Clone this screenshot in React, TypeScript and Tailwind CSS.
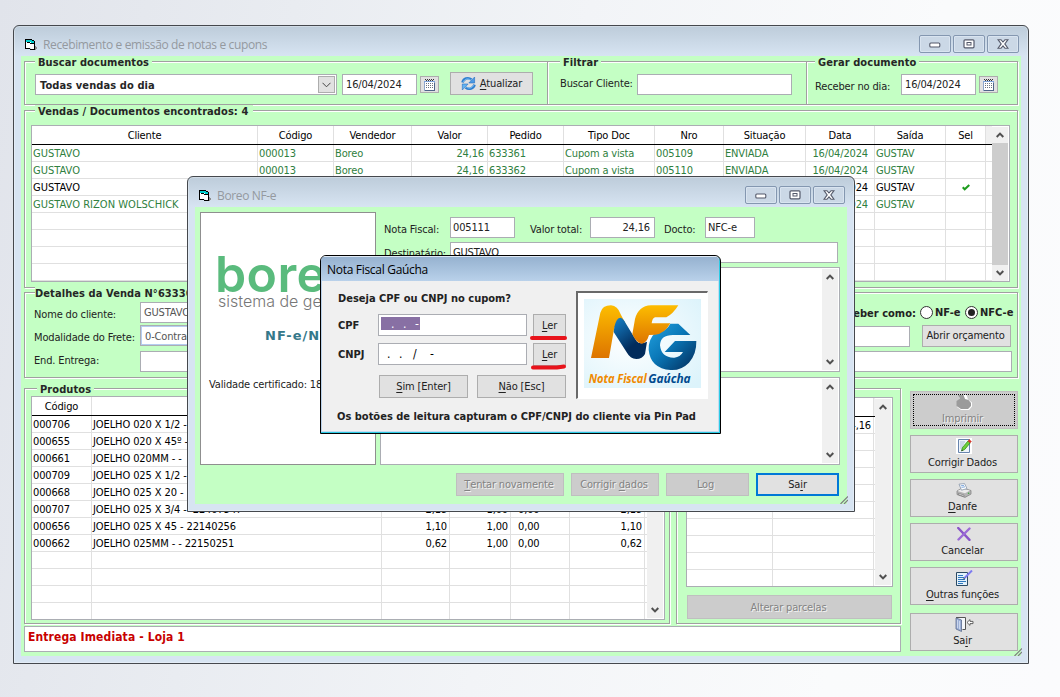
import type { ReactNode } from "react";

type Kids = { children?: ReactNode; className?: string };

/* ---------- small drawings ---------- */

const FormIcon = () => (
  <svg width="13" height="12" viewBox="0 0 13 12" shapeRendering="crispEdges">
    <path d="M1 1h6v1h2v8h-3v-1h-5z" fill="#fff" />
    <path d="M1 1h6v1h2v2h-3v-1h-5z" fill="#00d0d0" />
    <path d="M0 0h7v1h-7zM7 1h2v1h-2zM9 2h1v9h-1zM0 0h1v10h-1zM1 9h4v1h-4zM5 10h4v1h-4zM2 3h3v1h-3zM5 4h4v1h-4z" fill="#000" />
    <path d="M10 7h1v1h1v2h-1v1h-1z" fill="#8d8d8d" />
  </svg>
);

const CalendarIcon = () => (
  <svg width="11" height="12" viewBox="0 0 11 12" shapeRendering="crispEdges">
    <path d="M0 2h11v10H0z" fill="#8fa6cb" />
    <path d="M10 4h1v8H1v-1h9z" fill="#4f6488" />
    <path d="M1 3h9v8H1z" fill="#fff" />
    <path d="M0 2h11v1H0z" fill="#7ea4dc" />
    <path d="M1 0h1v1h-1zM3 0h1v1h-1zM5 0h1v1h-1zM7 0h1v1h-1zM9 0h1v1h-1zM2 1h1v1h-1zM4 1h1v1h-1zM6 1h1v1h-1zM8 1h1v1h-1z" fill="#333" />
    <path d="M2 4.5h7M2 6.5h7M2 8.5h7" stroke="#6c7480" strokeDasharray="1 1" />
  </svg>
);

const RefreshIcon = () => (
  <svg width="15" height="15" viewBox="0 0 15 15" fill="none">
    <path d="M1.5 6.5C2.4 2.7 7 .8 10.4 3.6" stroke="#2f7fd0" strokeWidth="2.6" />
    <path d="M13.6 1v6H7.8z" fill="#4b9be6" stroke="#2a6fc0" strokeWidth=".6" />
    <path d="M13.5 8.6C12.6 12.4 8 14.2 4.6 11.4" stroke="#2f7fd0" strokeWidth="2.6" />
    <path d="M1.3 14V8h5.8z" fill="#63b4f2" stroke="#2a6fc0" strokeWidth=".6" />
    <path d="M2.4 5.8C3.6 3 7 2 9.6 4M12.6 9.2c-1.2 2.8-4.6 3.8-7.2 1.8" stroke="#8fd0fa" strokeWidth=".8" />
  </svg>
);

const Chevron = ({ down = false }: { down?: boolean }) => (
  <svg width="8" height="6" viewBox="0 0 8 6" fill="none" stroke="#505050" strokeWidth="2">
    <path d={down ? "M.7 1l3.3 3.4L7.3 1" : "M.7 5L4 1.6 7.3 5"} />
  </svg>
);

const PrinterIcon = ({ off = false }: { off?: boolean }) =>
  off ? (
    <svg width="16" height="15" viewBox="0 0 16 15">
      <path d="M2.500 0h8l1.500 4.500 4 3v4l-3 3.500H5l-4-3V6l3-2z" fill="#fff" />
      <path d="M2 0h5.500l1.500 4 3.500 1 2.500 3v3l-3 3H5l-4.500-3V6L4 3.500z" fill="#9b9b9b" />
    </svg>
  ) : (
    <svg width="16" height="15" viewBox="0 0 16 15">
      <path d="M1 8l5-3 9 2.500v3.600L9 14.400 1 11.500z" fill="#b4b4b4" stroke="#858585" strokeWidth=".8" />
      <path d="M1.500 8L6 5.500l8 2.100-5 2.600z" fill="#ececec" />
      <path d="M3 1.200L8.500.6l2.500 5-5.500 1.600z" fill="#fff" stroke="#8796aa" strokeWidth=".8" />
      <path d="M4.700 2.800L8 2.400M5.500 4.400l3.500-.6" stroke="#5f93d3" strokeWidth=".8" />
      <path d="M2.500 10.300L8 12.200v1.200L2.500 11.600z" fill="#fff" stroke="#555" strokeWidth=".5" />
      <circle cx="12.600" cy="10.300" r=".8" fill="#3ba53b" />
    </svg>
  );

const EditIcon = () => (
  <svg width="16" height="16" viewBox="0 0 16 16">
    <path d="M0 0h16v16H0z" fill="#fff" />
    <path d="M2.500 1.500h11v13h-11z" fill="#eef4fb" stroke="#6784ad" />
    <path d="M4 4h5M4 6h4M4 8h3M4 10h3" stroke="#a9bdd8" />
    <path d="M5.500 13l1-3.500L12 3l2.200 1.800-5.500 6.700z" fill="#6fd03a" stroke="#2f8a1d" strokeWidth=".8" />
    <path d="M12 3l1.200-1.400 2.200 1.800-1.200 1.400z" fill="#d8382e" stroke="#d8382e" strokeWidth=".6" />
    <path d="M5.500 13l.4-1.500 1.200 1z" fill="#333" />
  </svg>
);

const CancelIcon = () => (
  <svg width="14" height="14" viewBox="0 0 14 14" fill="none" strokeLinecap="round">
    <path d="M1.200 1L12.500 12.800" stroke="#8a55c8" strokeWidth="2.400" />
    <path d="M12.500 1.500L1.500 12.500" stroke="#9b6bd6" strokeWidth="2.400" />
  </svg>
);

const NotesIcon = () => (
  <svg width="17" height="16" viewBox="0 0 17 16">
    <path d="M.5 2.500h11v13H.5z" fill="#e2f1fb" stroke="#2c4a63" />
    <path d="M2 5.500h5M2 7.500h6M2 9.500h7M2 11.500h8M2 13.500h5" stroke="#2f78bd" strokeWidth="1" />
    <path d="M8.500 8L16 .5" stroke="#7d7bf0" strokeWidth="2" />
    <path d="M7.300 9.300l1.500-1.500" stroke="#222" strokeWidth="1" />
  </svg>
);

const DoorIcon = () => (
  <svg width="19" height="15" viewBox="0 0 19 15">
    <path d="M1 .5h9.500v12H7.500" fill="#f5f7fb" stroke="#555" />
    <path d="M1 1l5.500 2v11.500L1 12z" fill="#9db0d6" stroke="#5b6b8e" strokeWidth=".8" />
    <path d="M2.500 3v8M4.500 4v8" stroke="#d5dff2" strokeWidth=".8" />
    <path d="M12 5.500L15 2.600v1.800h3v2.200h-3v1.800z" fill="#fff" stroke="#555" strokeWidth=".9" />
  </svg>
);

const Grip = () => (
  <svg width="8" height="8" viewBox="0 0 8 8" stroke="#7d7d7d" strokeWidth="1.200">
    <path d="M.5 8L8 .5M4 8l4-4" />
  </svg>
);

/* ---------- controls ---------- */

const U = ({ children }: Kids) => <span className="underline underline-offset-2">{children}</span>;

const Btn = ({ children, className = "", off = false }: Kids & { off?: boolean }) => (
  <button
    className={
      (off
        ? "border-[#bfbfbf] bg-[#cccccc] text-[#838383] [text-shadow:1px_1px_0_#f2f2f2] "
        : "border-[#adadad] bg-[#e1e1e1] text-[#222] ") +
      "flex shrink-0 items-center justify-center border whitespace-pre " +
      className
    }
  >
    {children}
  </button>
);

const Box = ({ children, className = "" }: Kids) => (
  <div className={"shrink-0 overflow-hidden border border-[#abadb3] bg-white whitespace-pre " + className}>{children}</div>
);

const Group = ({ children, className = "", title, legend = "" }: Kids & { title?: string; legend?: string }) => (
  <section
    className={
      "flex shrink-0 flex-col items-start border border-[#a0a0a0] shadow-[inset_1px_1px_0_#fff,1px_1px_0_#fff] " + className
    }
  >
    {title && (
      <h2
        className={
          "-mt-[6px] h-[14px] bg-[#c4ffc4] leading-[14px] font-bold tracking-[0.08px] whitespace-pre text-[#262626] " + legend
        }
      >
        {title}
      </h2>
    )}
    {children}
  </section>
);

const ScrollBar = ({ thumb = false, className = "" }: { thumb?: boolean; className?: string }) => (
  <div className={"flex w-4 shrink-0 flex-col items-center bg-[#f0f0f0] " + className}>
    <div className="flex h-[16px] shrink-0 items-center justify-center">
      <Chevron />
    </div>
    <div className={"w-full flex-1 " + (thumb ? "bg-[#cdcdcd]" : "")} />
    <div className="flex h-[16px] shrink-0 items-center justify-center">
      <Chevron down />
    </div>
  </div>
);

type Col = { w: string; head: string; cell?: string };

const Grid = ({ cols, rows, tones = [], tail }: { cols: Col[]; rows: ReactNode[][]; tones?: string[]; tail: string }) => (
  <div className="flex shrink-0 flex-col">
    <div className="flex h-[19px] shrink-0 border-b border-black">
      {cols.map((c, i) => (
        <div key={i} className={"shrink-0 overflow-hidden border-r border-[#e0e0e0] text-center leading-[20px] text-black " + c.w}>
          {c.head}
        </div>
      ))}
      <div className={"bg-[#f0f0f0] " + tail} />
    </div>
    {rows.map((r, y) => (
      <div key={y} className={"flex h-[17px] shrink-0 border-b border-[#e0e0e0] " + (tones[y] || "text-black")}>
        {cols.map((c, i) => (
          <div
            key={i}
            className={"shrink-0 overflow-hidden border-r border-[#e0e0e0] px-[1px] leading-[18px] whitespace-pre " + c.w + " " + (c.cell || "")}
          >
            {r[i]}
          </div>
        ))}
      </div>
    ))}
  </div>
);

const CapButton = ({ children }: Kids) => (
  <div className="flex h-[18px] w-8 items-center justify-center rounded-[2px] border border-[#8497b0] bg-[#cbd8e6] shadow-[inset_0_0_0_1px_#d9e4f0]">
    {children}
  </div>
);

const Caption = ({ title }: { title: string }) => (
  <header className="flex h-[30px] shrink-0 items-start">
    <span className="mt-[13px] ml-[11px]">
      <FormIcon />
    </span>
    <h1 className="mt-[10px] ml-[5px] flex-1 font-['Open_Sans','Noto_Sans',sans-serif] text-[12px] leading-[18px] tracking-[-0.36px] whitespace-pre text-[#94999f]">
      {title}
    </h1>
    <div className="mt-[9px] mr-[9px] flex gap-[2px]">
      <CapButton>
        <svg width="12" height="8" viewBox="0 0 12 8">
          <rect x=".8" y="3" width="10" height="4" rx="1" fill="#fff" stroke="#54596a" strokeWidth="1.100" />
        </svg>
      </CapButton>
      <CapButton>
        <svg width="12" height="10" viewBox="0 0 12 10">
          <rect x="1" y=".8" width="10" height="8" rx="1" fill="#fff" stroke="#54596a" strokeWidth="1.200" />
          <rect x="4" y="3.500" width="4" height="2.500" fill="#fff" stroke="#54596a" />
        </svg>
      </CapButton>
      <CapButton>
        <svg width="12" height="10" viewBox="0 0 12 10">
          <path d="M1 .7h3L6 3 8 .7h3L7.800 4.900 11 9.300H8L6 6.900 4 9.300H1l3.200-4.400z" fill="#fff" stroke="#54596a" strokeWidth="1.100" />
        </svg>
      </CapButton>
    </div>
  </header>
);

/* ---------- data ---------- */

const salesCols: Col[] = [
  { w: "w-[226px]", head: "Cliente", cell: "tracking-[0.03px]" },
  { w: "w-[76px]", head: "Código" },
  { w: "w-[78px]", head: "Vendedor" },
  { w: "w-[76px]", head: "Valor", cell: "text-right pr-[3px]" },
  { w: "w-[76px]", head: "Pedido" },
  { w: "w-[91px]", head: "Tipo Doc" },
  { w: "w-[69px]", head: "Nro" },
  { w: "w-[82px]", head: "Situação" },
  { w: "w-[69px]", head: "Data", cell: "text-right pr-[6px]" },
  { w: "w-[71px]", head: "Saída" },
  { w: "w-[40px]", head: "Sel", cell: "flex items-center justify-center" },
];

const Check = () => (
  <svg width="8" height="7" viewBox="0 0 8 7" fill="none">
    <path d="M.7 3.300l2 2L7.300 1" stroke="#1d9c1d" strokeWidth="2" />
  </svg>
);

const sales: ReactNode[][] = [
  ["GUSTAVO", "000013", "Boreo", "24,16", "633361", "Cupom a vista", "005109", "ENVIADA", "16/04/2024", "GUSTAV"],
  ["GUSTAVO", "000013", "Boreo", "24,16", "633362", "Cupom a vista", "005110", "ENVIADA", "16/04/2024", "GUSTAV"],
  ["GUSTAVO", "", "", "", "", "", "", "", "16/04/2024", "GUSTAV", <Check key="check" />],
  ["GUSTAVO RIZON WOLSCHICK", "", "", "", "", "", "", "", "16/04/2024", "GUSTAV"],
  [], [], [], [],
];

const G = "text-[#2f8040]";

const productCols: Col[] = [
  { w: "w-[60px]", head: "Código" },
  { w: "w-[290px]", head: "", cell: "tracking-[-0.1px]" },
  { w: "w-[68px]", head: "", cell: "text-right pr-[2px]" },
  { w: "w-[61px]", head: "", cell: "text-right pr-[2px]" },
  { w: "w-[59px]", head: "", cell: "pl-[7px]" },
  { w: "w-[75px]", head: "", cell: "text-right pr-[2px]" },
];

const products: ReactNode[][] = [
  ["000706", "JOELHO 020 X 1/2 -"],
  ["000655", "JOELHO 020 X 45º -"],
  ["000661", "JOELHO 020MM - -"],
  ["000709", "JOELHO 025 X 1/2 -"],
  ["000668", "JOELHO 025 X 20 -"],
  ["000707", "JOELHO 025 X 3/4 -  22407547", "2,18", "1,00", "0,00", "2,18"],
  ["000656", "JOELHO 025 X 45 - 22140256", "1,10", "1,00", "0,00", "1,10"],
  ["000662", "JOELHO 025MM - - 22150251", "0,62", "1,00", "0,00", "0,62"],
  [], [], [], [],
];

const parcelCols: Col[] = [
  { w: "w-[86px]", head: "" },
  { w: "w-[101px]", head: "", cell: "text-right pr-[2px]" },
];

const parcels: ReactNode[][] = [["", "24,16"], [], [], [], [], [], [], [], [], []];

/* ---------- windows ---------- */

const Radio = ({ on = false }: { on?: boolean }) => (
  <span className="flex size-[13px] shrink-0 items-center justify-center rounded-full border border-[#333] bg-white">
    {on && <span className="size-[7px] rounded-full bg-[#222]" />}
  </span>
);

const SideButton = ({ icon, children, className = "", off = false }: Kids & { icon: ReactNode; off?: boolean }) => (
  <Btn off={off} className={"relative h-[38px] w-[108px] flex-col " + className}>
    <span className="flex h-[16px] items-center">{icon}</span>
    <span className="h-[16px] pr-[3px] leading-[18px]">{children}</span>
    {off && <span className="absolute inset-[2px] border border-dotted border-black" />}
  </Btn>
);

const DateField = () => (
  <>
    <Box className="h-[21px] w-[75px] pl-[3px] leading-[19px] text-[#222]">16/04/2024</Box>
    <Btn className="mt-[2px] ml-[3px] h-[17px] w-[19px]">
      <CalendarIcon />
    </Btn>
  </>
);

const WINDOW =
  "absolute flex flex-col rounded-t-[6px] border border-[#45484d] bg-[#d7e4f2] bg-[linear-gradient(#bdccda,#d7e4f2_30px)] shadow-[inset_0_0_0_1px_rgba(255,255,255,0.3)]";

const MainWindow = () => (
  <div className={WINDOW + " top-[25px] left-[13px] h-[639px] w-[1016px]"}>
    <Caption title="Recebimento e emissão de notas e cupons" />
    <main className="ml-[7px] flex h-[600px] w-[1000px] flex-col bg-[#c4ffc4] pt-[5px] pl-[3px]">
      <div className="flex">
        <Group title="Buscar documentos" legend="ml-[10px] px-[3px]" className="h-[44px] w-[524px]">
          <div className="ml-[10px] flex items-start">
            <Box className="mt-[4px] flex h-[21px] w-[302px] justify-between pl-[4px] leading-[21px] font-bold tracking-[0.1px] text-[#262626]">
              Todas vendas do dia
              <span className="mt-[1px] mr-[1px] flex h-[17px] w-[17px] items-center justify-center border border-[#adadad] bg-[#e1e1e1]">
                <svg width="9" height="6" viewBox="0 0 9 6" fill="none" stroke="#444">
                  <path d="M.5 .8l4 4 4-4" />
                </svg>
              </span>
            </Box>
            <div className="mt-[4px] ml-[5px] flex items-start">
              <DateField />
            </div>
            <Btn className="mt-[2px] ml-[11px] h-[23px] w-[83px] gap-[4px]">
              <RefreshIcon />
              <span className="pt-[2px]">
                <U>A</U>tualizar
              </span>
            </Btn>
          </div>
        </Group>
        <Group title="Filtrar" legend="ml-[12px] px-[3px]" className="-ml-px h-[44px] w-[260px]">
          <div className="mt-[4px] ml-[12px] flex items-start">
            <span className="w-[77px] leading-[19px] whitespace-pre text-[#222]">Buscar Cliente:</span>
            <Box className="h-[21px] w-[155px]" />
          </div>
        </Group>
        <Group title="Gerar documento" legend="ml-[8px] px-[3px]" className="-ml-px h-[44px] w-[212px]">
          <div className="mt-[4px] ml-[8px] flex items-start">
            <span className="mt-[3px] w-[86px] leading-[19px] whitespace-pre text-[#222]">Receber no dia:</span>
            <DateField />
          </div>
        </Group>
      </div>

      <Group title="Vendas / Documentos encontrados: 4" legend="ml-[10px] pl-[3px] pr-[5px]" className="mt-[5px] h-[178px] w-[994px]">
        <Box className="mt-[6px] ml-[6px] flex h-[157px] w-[979px]">
          <Grid cols={salesCols} rows={sales} tones={[G, G, "text-black", G]} tail="w-[6px]" />
          <ScrollBar thumb className="mt-[1px]" />
        </Box>
      </Group>

      <Group title="Detalhes da Venda N°633363" legend="ml-[10px]" className="mt-[4px] h-[86px] w-[994px] text-[#222]">
        <div className="mt-[1px] ml-[9px] flex h-[23px] items-start">
          <span className="w-[106px] leading-[25px] whitespace-pre">Nome do cliente:</span>
          <Box className="h-[21px] w-[620px] pl-[3px] leading-[19px] text-[#555]">GUSTAVO</Box>
          <div className="ml-[68px] flex h-[21px] items-center font-bold tracking-[0.02px] whitespace-pre">
            <span className="w-[92px] pt-[3px] pr-[4px] text-right">Receber como:</span>
            <Radio />
            <span className="ml-[2px] w-[30px] pt-[1px]">NF-e</span>
            <Radio on />
            <span className="ml-[2px] pt-[1px]">NFC-e</span>
          </div>
        </div>
        <div className="ml-[9px] flex h-[26px] items-start">
          <span className="w-[106px] leading-[25px] whitespace-pre">Modalidade do Frete:</span>
          <Box className="h-[21px] w-[400px] pl-[4px] leading-[21px] text-[#555] shadow-[inset_0_0_0_1px_#b5cdf0]">0-Contratação</Box>
          <Box className="mt-[1px] ml-[10px] h-[21px] w-[360px]" />
          <Btn className="ml-[12px] h-[22px] w-[89px] pt-[1px] pr-[2px]">Abrir orçamento</Btn>
        </div>
        <div className="ml-[9px] flex items-start">
          <span className="w-[106px] leading-[19px] whitespace-pre">End. Entrega:</span>
          <Box className="h-[21px] w-[872px]" />
        </div>
      </Group>

      <div className="flex">
        <div className="mt-[10px] flex w-[877px] shrink-0 flex-col">
          <div className="flex">
            <Group title="Produtos" legend="ml-[12px] px-[3px]" className="h-[236px] w-[646px]">
              <Box className="-mt-[1px] ml-[6px] flex h-[224px] w-[634px]">
                <Grid cols={productCols} rows={products} tail="w-[2px]" />
                <ScrollBar className="my-[1px]" />
              </Box>
            </Group>
            <Group className="ml-[6px] h-[236px] w-[225px]">
              <Box className="mt-[8px] ml-[9px] flex h-[190px] w-[207px]">
                <Grid cols={parcelCols} rows={parcels} tail="w-[1px]" />
                <ScrollBar className="my-[1px]" />
              </Box>
              <Btn off className="mt-[8px] ml-[10px] h-[24px] w-[205px] pt-[2px] pr-[2px]">
                Alterar parcelas
              </Btn>
            </Group>
          </div>
          <Box className="mt-[2px] h-[26px] w-[877px] pl-[3px] text-[12px] leading-[20px] font-bold tracking-[0.12px] text-[#c80000]">
            Entrega Imediata - Loja 1
          </Box>
        </div>
        <aside className="mt-[13px] ml-[9px] flex flex-col gap-[6px]">
          <SideButton off icon={<PrinterIcon off />}>
            <U>I</U>mprimir
          </SideButton>
          <SideButton icon={<EditIcon />}>Corrigir Dados</SideButton>
          <SideButton icon={<PrinterIcon />}>
            <U>D</U>anfe
          </SideButton>
          <SideButton icon={<CancelIcon />}>Cancelar</SideButton>
          <SideButton icon={<NotesIcon />}>
            <U>O</U>utras funções
          </SideButton>
          <SideButton icon={<DoorIcon />} className="mt-[2px]">
            Sa<U>i</U>r
          </SideButton>
        </aside>
      </div>
    </main>
    <span className="absolute right-[6px] bottom-[7px]">
      <Grip />
    </span>
  </div>
);

const InvoiceWindow = () => (
  <div className={WINDOW + " top-[176px] left-[187px] h-[336px] w-[668px]"}>
    <Caption title="Boreo NF-e" />
    <main className="ml-[7px] flex h-[297px] w-[652px] flex-col bg-[#c4ffc4] pt-[5px] pl-[5px] text-[#222]">
      <div className="flex">
        <div className="flex h-[253px] w-[176px] shrink-0 flex-col overflow-hidden border border-[#8f8f8f] bg-white whitespace-pre">
          <div className="mt-[31px] ml-[14px] font-['Inter',sans-serif] text-[50px] leading-[60px] font-semibold tracking-[0.4px] text-[#5abb7d]">
            boreo
          </div>
          <div className="-mt-[12px] ml-[17px] font-['Inter',sans-serif] text-[16px] leading-[18px] font-light tracking-[0px] text-[#777]">
            sistema de gestão
          </div>
          <div className="mt-[17px] ml-[64px] font-['DejaVu_Sans',sans-serif] text-[13px] leading-[18px] font-bold tracking-[1px] text-[#35788a]">
            NF-e/NFC-e
          </div>
          <div className="mt-[31px] ml-[8px] leading-[18px]">Validade certificado: 18</div>
        </div>
        <div className="ml-[4px] flex flex-col">
          <div className="mt-[5px] ml-[4px] flex h-[24px] items-start whitespace-pre">
            <span className="w-[66px] leading-[25px]">Nota Fiscal:</span>
            <Box className="h-[21px] w-[65px] pl-[2px] leading-[19px]">005111</Box>
            <span className="ml-[15px] w-[60px] leading-[25px]">Valor total:</span>
            <Box className="h-[21px] w-[65px] pr-[4px] text-right leading-[19px]">24,16</Box>
            <span className="ml-[9px] w-[41px] leading-[25px]">Docto:</span>
            <Box className="h-[21px] w-[50px] pl-[2px] leading-[19px]">NFC-e</Box>
          </div>
          <div className="ml-[4px] flex items-start whitespace-pre">
            <span className="h-[21px] w-[66px] leading-[26px]">Destinatário:</span>
            <Box className="mt-[1px] h-[21px] w-[388px] pl-[2px] leading-[19px]">GUSTAVO</Box>
          </div>
          <Box className="mt-[4px] flex h-[105px] w-[460px] justify-end p-[1px]">
            <ScrollBar />
          </Box>
          <Box className="mt-[5px] flex h-[88px] w-[460px] justify-end p-[1px]">
            <ScrollBar />
          </Box>
        </div>
      </div>
      <div className="mt-[8px] ml-[256px] flex gap-[7px]">
        <Btn off className="h-[23px] w-[108px] pt-[2px] pr-[2px]">
          <U>T</U>entar novamente
        </Btn>
        <Btn off className="h-[23px] w-[88px] pt-[2px] pr-[2px]">
          Corrigir <U>d</U>ados
        </Btn>
        <Btn off className="h-[23px] w-[83px] pt-[2px] pr-[4px]">
          Log
        </Btn>
        <Btn className="h-[23px] w-[83px] border-2 !border-[#0078d7] pt-[2px]">
          Sa<U>i</U>r
        </Btn>
      </div>
    </main>
    <span className="absolute right-[6px] bottom-[7px]">
      <Grip />
    </span>
  </div>
);

const NfgLogo = () => (
  <svg width="117" height="89" viewBox="71 297 351 267">
    <defs>
      <radialGradient id="sky" cx=".4" cy=".45" r=".75">
        <stop offset="0" stopColor="#fff" />
        <stop offset="1" stopColor="#dcf3fb" />
      </radialGradient>
      <linearGradient id="gold" x1="0" y1="0" x2="0" y2="1">
        <stop offset="0" stopColor="#fdbd00" />
        <stop offset="1" stopColor="#dd7400" />
      </linearGradient>
      <linearGradient id="navy" x1="0" y1="0" x2=".6" y2="1">
        <stop offset="0" stopColor="#1683cb" />
        <stop offset=".75" stopColor="#022c5c" />
      </linearGradient>
      <linearGradient id="blue" x1="0" y1="0" x2="1" y2="1">
        <stop offset="0" stopColor="#22a2e0" />
        <stop offset=".45" stopColor="#0a78b8" />
        <stop offset="1" stopColor="#022a58" />
      </linearGradient>
    </defs>
    <path d="M71 297h351v267H71z" fill="url(#sky)" />
    <path d="M92 474L120 338Q126 316 152 316Q172 317 181 343L210 398L162 382L146 474Z" fill="url(#gold)" />
    <path d="M162 381Q168 353 181 353Q190 356 196 370L229 424Q238 435 260 425L254 462Q246 477 228 477Q209 475 200 458L160 396Z" fill="url(#navy)" />
    <path
      d="M354 371L390 405H345Q300 402 299 436Q303 474 342 473Q360 471 368 456H313L344 423H408Q409 462 386 488Q362 512 331 510Q270 505 265 449Q264 417 285 398Q318 396 330 371Z"
      fill="url(#blue)"
    />
    <path
      d="M354 316Q338 342 318 352H284Q276 354 274 370H330Q312 402 285 404L266 405Q259 430 244 431Q228 429 216 403L224 357Q234 318 272 316Z"
      fill="url(#gold)"
    />
    <text
      x="85"
      y="548"
      fontFamily="'Open Sans','Noto Sans',sans-serif"
      fontSize="38"
      fontWeight="700"
      fontStyle="italic"
      textLength="174"
      lengthAdjust="spacingAndGlyphs"
      fill="#f08a00"
    >
      Nota Fiscal
    </text>
    <text
      x="264"
      y="548"
      fontFamily="'Open Sans','Noto Sans',sans-serif"
      fontSize="38"
      fontWeight="700"
      fontStyle="italic"
      textLength="127"
      lengthAdjust="spacingAndGlyphs"
      fill="#004a8f"
    >
      Gaúcha
    </text>
  </svg>
);

const RedMark = ({ d }: { d: string }) => (
  <svg className="absolute top-[21px] -left-[4px]" width="40" height="8" viewBox="0 0 40 8" fill="none">
    <path d={d} stroke="#e8131b" strokeWidth="4" strokeLinecap="round" />
  </svg>
);

const DocumentDialog = () => (
  <div className="absolute top-[255px] left-[320px] flex h-[179px] w-[401px] flex-col rounded-t-[6px] border border-black bg-[#f0f0f0] text-[#222] shadow-[inset_-1px_-1px_0_#2ccbe4,inset_1px_0_0_#b9d1ea,inset_-2px_-2px_0_#c5dbf0]">
    <header className="mr-[1px] h-[25px] shrink-0 rounded-t-[5px] bg-[linear-gradient(#dfe9f4_1px,#96b2d0_1px,#b9d1ea)] pl-[6px] font-['Open_Sans','Noto_Sans',sans-serif] text-[12px] leading-[28px] tracking-[-0.3px] text-black">
      Nota Fiscal Gaúcha
    </header>
    <div className="flex">
      <div className="ml-[17px] flex w-[238px] shrink-0 flex-col whitespace-pre">
        <div className="mt-[8px] h-[25px] leading-[19px] font-bold tracking-[0px]">Deseja CPF ou CNPJ no cupom?</div>
        <div className="flex h-[29px]">
          <span className="w-[40px] leading-[23px] font-bold tracking-[0px]">CPF</span>
          <Box className="h-[22px] w-[149px] pt-[2px] pl-[2px]">
            <span className="flex h-[13px] w-[39px] bg-[#8870a4] pl-[10px] text-[12px] leading-[14px] text-white">
              <span className="w-[12px]">.</span>
              <span className="w-[12px]">.</span>
              <span>-</span>
            </span>
          </Box>
          <div className="relative ml-[6px]">
            <Btn className="h-[23px] w-[33px] pt-[2px]">
              <U>L</U>er
            </Btn>
            <RedMark d="M3 3h33" />
          </div>
        </div>
        <div className="flex h-[32px]">
          <span className="w-[40px] leading-[23px] font-bold tracking-[0px]">CNPJ</span>
          <Box className="flex h-[22px] w-[149px] pl-[8px] text-[12px] leading-[20px] text-black">
            <span className="w-[12px]">.</span>
            <span className="w-[14px]">.</span>
            <span className="w-[17px]">/</span>
            <span>-</span>
          </Box>
          <div className="relative ml-[6px]">
            <Btn className="h-[23px] w-[33px] pt-[2px]">
              <U>L</U>er
            </Btn>
            <RedMark d="M4 3.500h24l7-1" />
          </div>
        </div>
        <div className="ml-[41px] flex gap-[9px]">
          <Btn className="h-[23px] w-[89px] pt-[2px]">
            <U>S</U>im [Enter]
          </Btn>
          <Btn className="h-[23px] w-[89px] pt-[2px]">
            <U>N</U>ão [Esc]
          </Btn>
        </div>
      </div>
      <div className="mt-[10px] flex h-[108px] w-[132px] items-start border-t-2 border-r border-b border-l-2 border-t-[#696969] border-r-white border-b-white border-l-[#696969] bg-white pt-[6px] pl-[6px]">
        <NfgLogo />
      </div>
    </div>
    <div className="mt-[8px] ml-[16px] leading-[19px] font-bold tracking-[0px] whitespace-pre">
      Os botões de leitura capturam o CPF/CNPJ do cliente via Pin Pad
    </div>
  </div>
);

export default function App() {
  return (
    <div className="relative h-[697px] w-[1060px] overflow-hidden bg-[linear-gradient(100deg,#e1e4eb,#e9ecf1_25%,#f2f4f7_50%,#fafbfc_80%,#fbfbfd)] font-['DejaVu_Sans_Condensed','DejaVu_Sans',sans-serif] text-[11px] tracking-[-0.15px]">
      <MainWindow />
      <InvoiceWindow />
      <DocumentDialog />
    </div>
  );
}
